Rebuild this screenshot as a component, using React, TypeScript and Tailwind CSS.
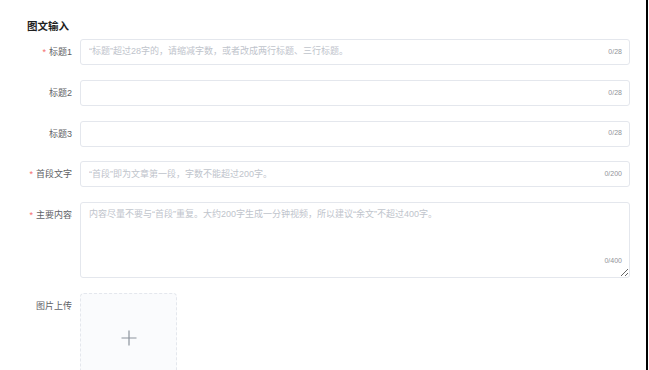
import React from "react";

const font = { fontFamily: '"Liberation Sans", "Noto Sans CJK SC", sans-serif' };

type Field = {
  label: string;
  required?: boolean;
  placeholder?: string;
  max: number;
};

const fields: Field[] = [
  {
    label: "标题1",
    required: true,
    placeholder: "“标题”超过28字的，请缩减字数，或者改成两行标题、三行标题。",
    max: 28,
  },
  { label: "标题2", max: 28 },
  { label: "标题3", max: 28 },
  {
    label: "首段文字",
    required: true,
    placeholder: "“首段”即为文章第一段，字数不能超过200字。",
    max: 200,
  },
];

function Label({ text, required }: { text: string; required?: boolean }) {
  return (
    <div className="w-[53px] shrink-0 pr-[8px] text-right text-[9px] leading-[26px] text-[#606266]">
      {required && <span className="mr-[3px] text-[#f56c6c]">*</span>}
      {text}
    </div>
  );
}

export default function App() {
  return (
    <div className="flex h-[370px] w-[649px] overflow-hidden bg-white" style={font}>
      <div className="w-[646px] pl-[27px] pr-[16px] pt-[19px]">
        <h3 className="mb-[6px] text-[10.5px] font-bold leading-[14px] text-[#1f1f1f]">
          图文输入
        </h3>

        {fields.map((f) => (
          <div key={f.label} className="mb-[14.75px] flex">
            <Label text={f.label} required={f.required} />
            <div className="flex h-[26px] flex-1 items-center rounded-[3px] border border-[#e4e7ed] pl-[8px] pr-[7px]">
              <input
                className="min-w-0 flex-1 bg-transparent text-[9px] text-[#606266] outline-none placeholder:text-[#c0c4cc]"
                style={font}
                placeholder={f.placeholder}
              />
              <span className="text-[7px] text-[#909399]">0/{f.max}</span>
            </div>
          </div>
        ))}

        <div className="mb-[15px] flex">
          <Label text="主要内容" required />
          <div className="relative flex-1">
            <textarea
              className="block h-[76px] w-full rounded-[3px] border border-[#e4e7ed] px-[8px] py-[4px] text-[9px] leading-[14px] text-[#606266] outline-none placeholder:text-[#c0c4cc]"
              style={font}
              placeholder="内容尽量不要与“首段”重复。大约200字生成一分钟视频，所以建议“余文”不超过400字。"
            />
            <span className="absolute bottom-[12px] right-[8px] text-[7px] text-[#909399]">
              0/400
            </span>
          </div>
        </div>

        <div className="flex">
          <Label text="图片上传" />
          <div className="flex h-[90px] w-[97px] items-center justify-center rounded-[4px] border border-dashed border-[#e4e7ed] bg-[#fafbfd]">
            <svg width="16" height="16" viewBox="0 0 16 16" fill="none">
              <path d="M8 0.5V15.5M0.5 8H15.5" stroke="#8c939d" strokeWidth="1.2" />
            </svg>
          </div>
        </div>
      </div>
      <div className="w-[2px] bg-black" />
      <div className="w-[1px] bg-white" />
    </div>
  );
}
